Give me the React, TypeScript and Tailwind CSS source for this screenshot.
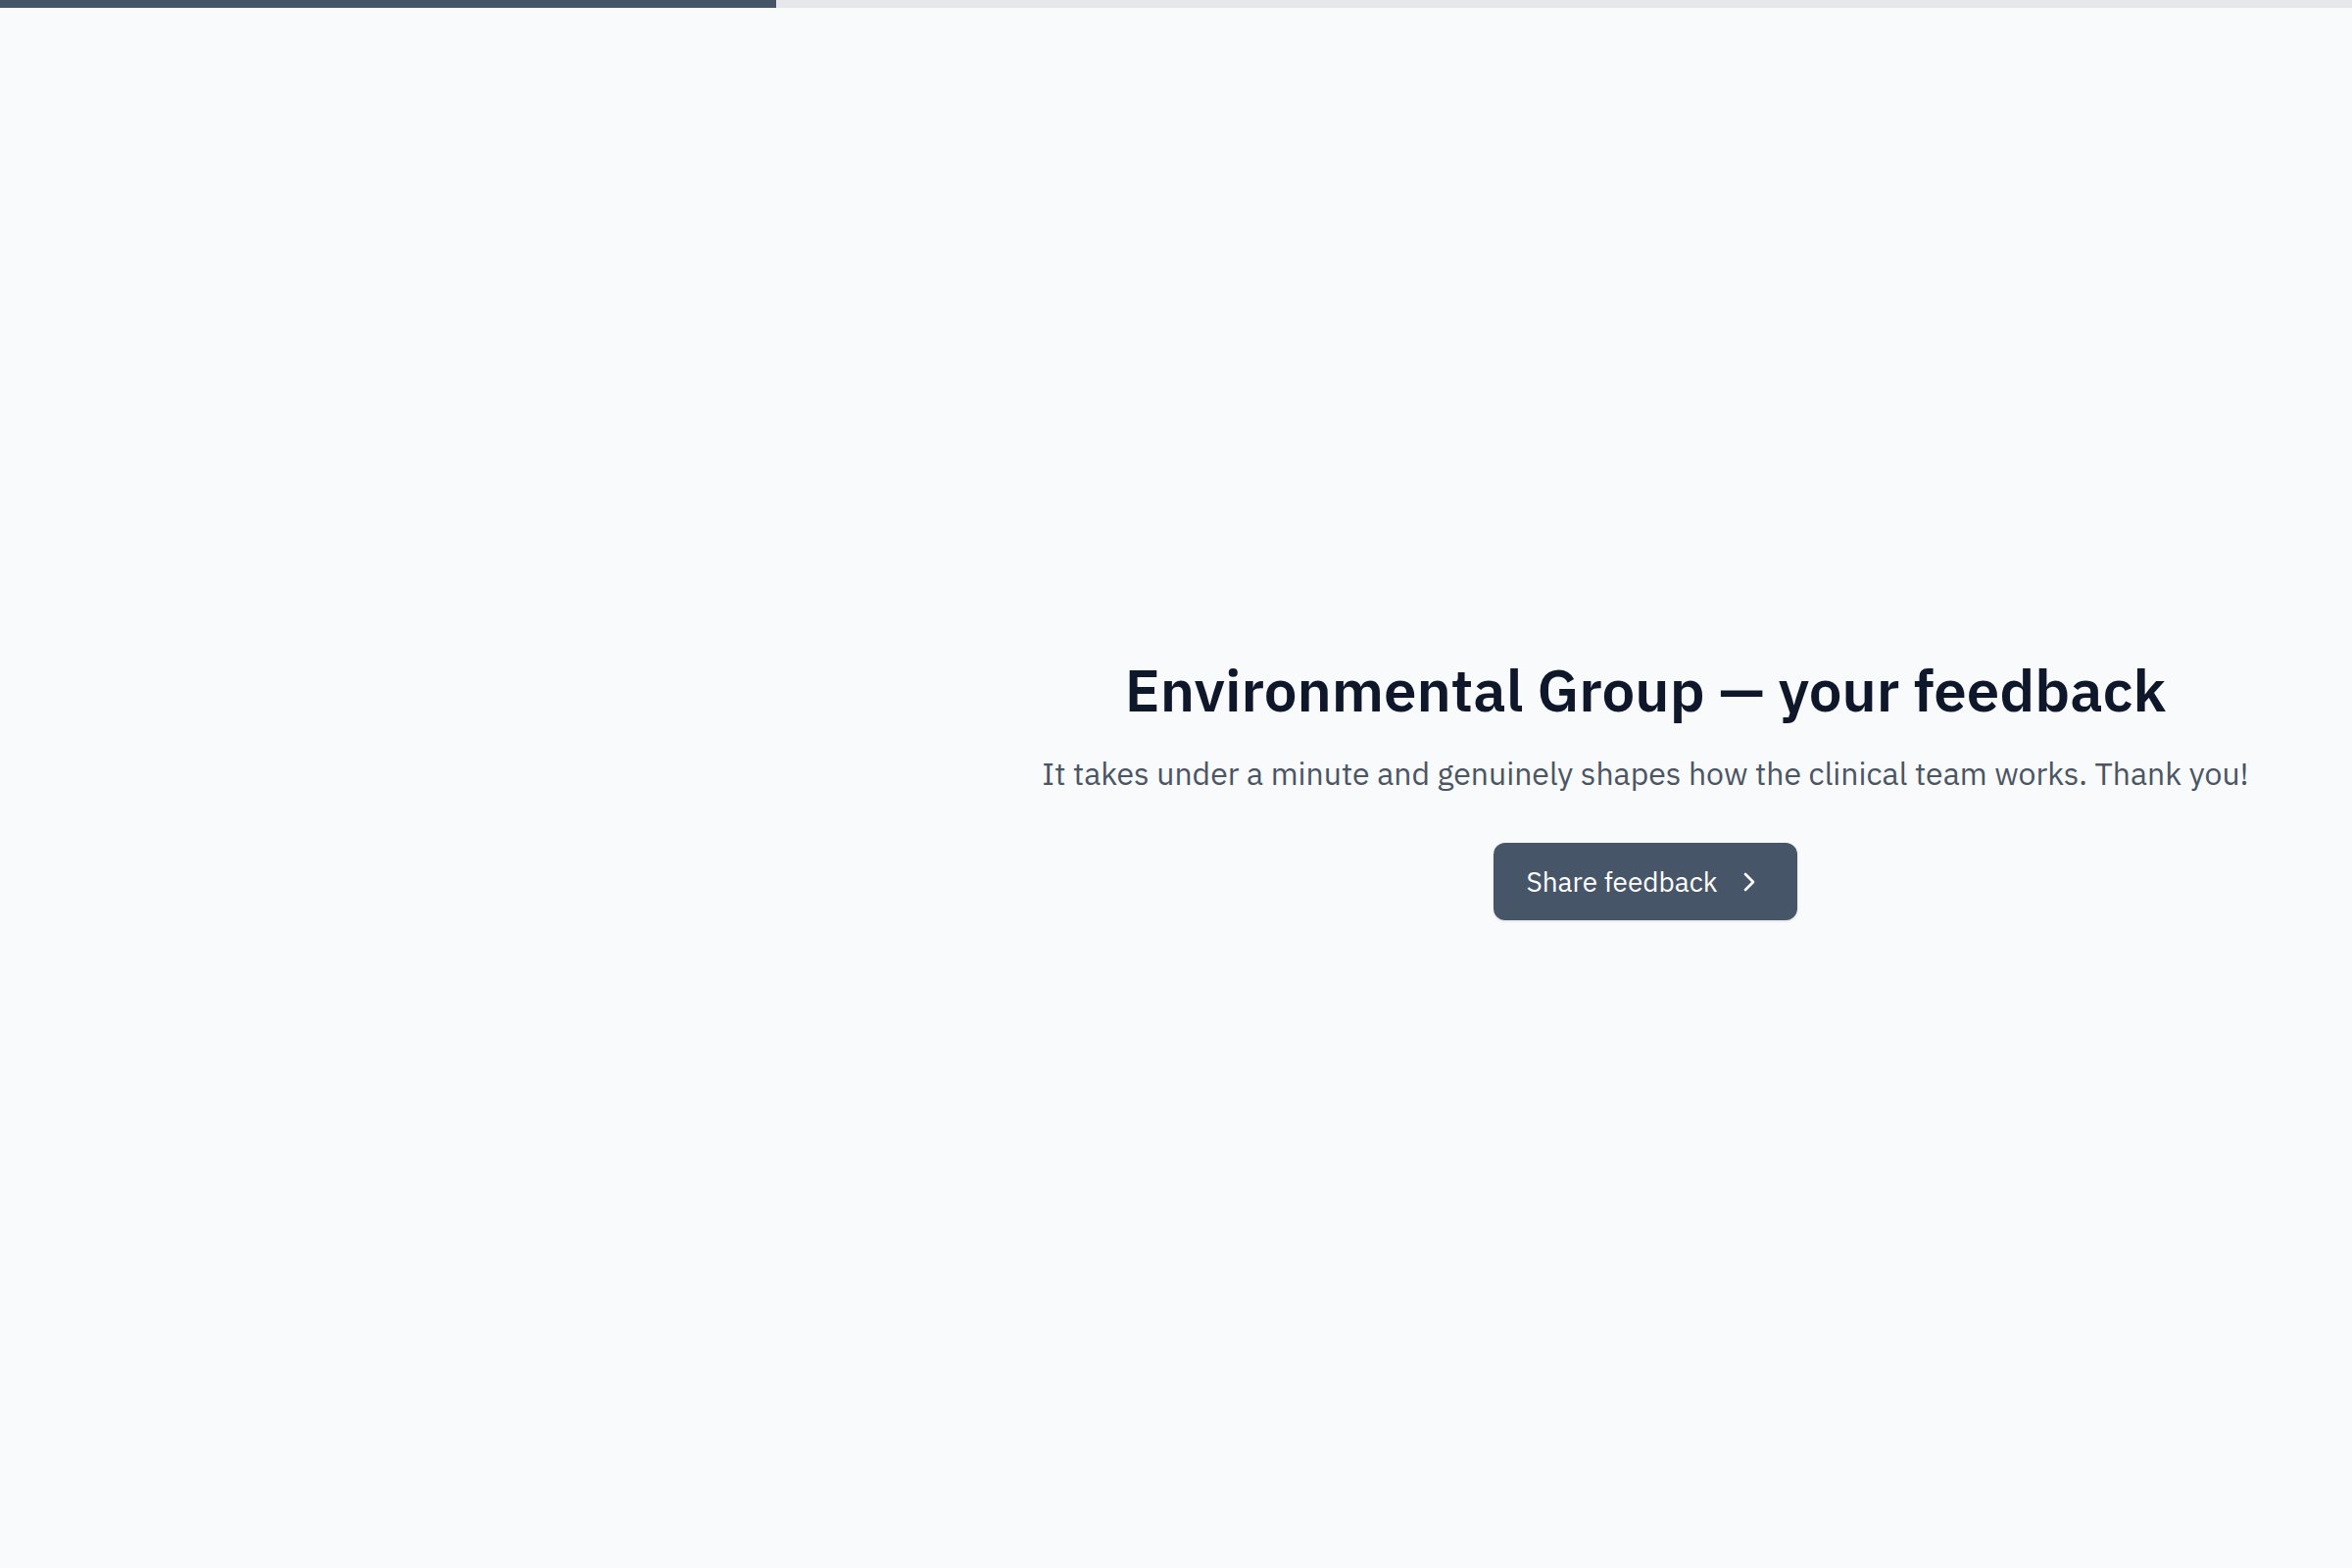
import React from 'react';
import { ChevronRight } from 'lucide-react';

const font = { fontFamily: '"IBM Plex Sans", "Noto Sans", "Open Sans", sans-serif' };

export default function App() {
  const progress = 33;

  return (
    <div className="min-h-screen flex flex-col bg-[#f8fafc]" style={font}>
      {/* Progress */}
      <div className="h-2 w-full bg-[#e5e7eb]">
        <div className="h-full bg-[#475569]" style={{ width: `${progress}%` }} />
      </div>

      <main className="flex-1 flex">
        <aside className="w-[958px] shrink-0" />

        <section className="flex-1 flex flex-col items-center justify-center text-center pb-[1px]">
          <h1 className="text-[60px] leading-[72px] font-semibold text-[#0f172a]">
            Environmental Group — your feedback
          </h1>
          <p className="mt-[25px] text-[32px] leading-[48px] text-[#4b5563]">
            It takes under a minute and genuinely shapes how the clinical team works. Thank you!
          </p>
          <button className="mt-[47px] flex items-center gap-4 rounded-xl bg-[#475569] pl-[33px] pr-[33px] py-[18px] text-[28px] leading-[43px] text-white shadow-sm">
            <span>Share feedback</span>
            <ChevronRight size={32} strokeWidth={2} />
          </button>
        </section>
      </main>
    </div>
  );
}
